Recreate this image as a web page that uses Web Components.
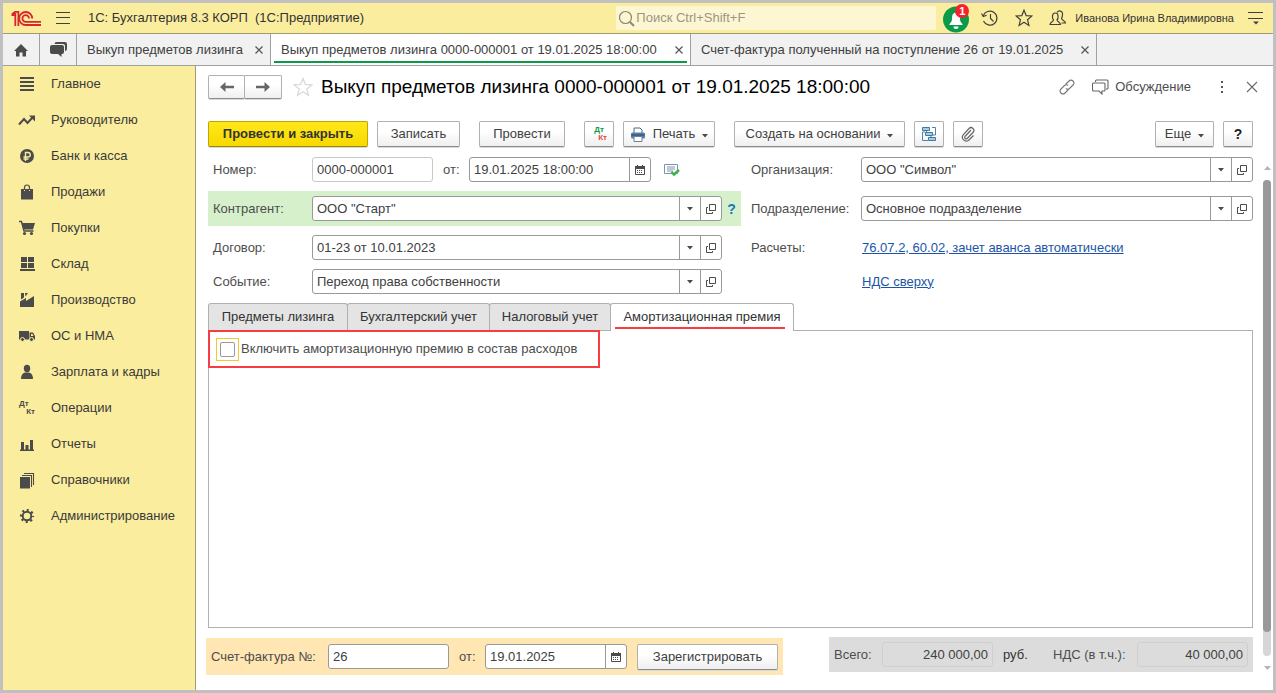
<!DOCTYPE html>
<html lang="ru">
<head>
<meta charset="utf-8">
<title>1С: Бухгалтерия 8.3 КОРП</title>
<style>
  html, body { margin: 0; height: 100%; }
  body { font: 13px/16px "Liberation Sans", Arial, sans-serif; color: #404040; background: #fff; }
</style>
</head>
<body>
<app-shell>
  <app-header slot="header"></app-header>
  <window-tabs slot="tabs">
    <window-tab icon="home"></window-tab>
    <window-tab icon="chat"></window-tab>
    <window-tab closable style="width:194px">Выкуп предметов лизинга</window-tab>
    <window-tab closable active style="width:420px">Выкуп предметов лизинга 0000-000001 от 19.01.2025 18:00:00</window-tab>
    <window-tab closable style="width:406px">Счет-фактура полученный на поступление 26 от 19.01.2025</window-tab>
  </window-tabs>
  <side-nav slot="nav">
    <nav-item icon="list">Главное</nav-item>
    <nav-item icon="trend">Руководителю</nav-item>
    <nav-item icon="ruble">Банк и касса</nav-item>
    <nav-item icon="bag">Продажи</nav-item>
    <nav-item icon="cart">Покупки</nav-item>
    <nav-item icon="store">Склад</nav-item>
    <nav-item icon="factory">Производство</nav-item>
    <nav-item icon="truck">ОС и НМА</nav-item>
    <nav-item icon="person">Зарплата и кадры</nav-item>
    <nav-item icon="dtkt">Операции</nav-item>
    <nav-item icon="bars">Отчеты</nav-item>
    <nav-item icon="books">Справочники</nav-item>
    <nav-item icon="gear">Администрирование</nav-item>
  </side-nav>
  <document-form></document-form>
</app-shell>

<script>
const DARK = '#4b4b4b';
const ICONS = {
  logo: [30, 17, `<g fill="none" stroke="#d8262b" stroke-width="1.800"><path d="M.5 5H3v-.500M3.200 5V2.500M1 4.200L4 1.800H7.400V16M4.300 3v13"/><path d="M21.200 8.500A6.500 6.500 0 1 0 14.700 15H30"/><path d="M18 8.500A3.300 3.300 0 1 0 14.700 11.800H30"/></g>`],
  burger: [14, 12, `<path d="M0 .5h14M0 5.500h14M0 11.500h14" stroke="#404040" fill="none"/>`],
  search: [17, 17, `<circle cx="7.500" cy="7.500" r="6" fill="none" stroke="#8c8768" stroke-width="1.200"/><path d="M12 12l4 4" stroke="#8c8768" stroke-width="2"/>`],
  bell: [30, 29, `<circle cx="14" cy="15.500" r="13" fill="#0a9a48"/><path d="M14 8.500c3.500.5 4 3 4 6 0 3 1 4 2.500 5.500v1h-13v-1C9 18.500 10 17.500 10 14.500c0-3 .5-5.500 4-6z" fill="#fff"/><path d="M11.500 22.500h5a2.500 2.500 0 0 1-5 0z" fill="#fff"/>`],
  history: [18, 18, `<g fill="none" stroke="#404040" stroke-width="1.200"><path d="M2.200 7A7 7 0 1 1 2.500 12"/><path d="M.5 4.500L2.300 7.600l3.300-1.400M9.500 5v4.500l3 3"/></g>`],
  star: [18, 18, `<path d="M9 1.200l2.200 5.400 5.700.4-4.400 3.700 1.400 5.700L9 13.300l-4.900 3.100 1.400-5.700L1.100 7l5.700-.4z" fill="none" stroke="#404040" stroke-width="1.200"/>`],
  favorite: [20, 20, `<path d="M10 1.500l2.400 6 6.400.4-5 4.100 1.700 6.300L10 14.800l-5.500 3.500L6.200 12l-5-4.100 6.400-.4z" fill="none" stroke="#d9d9d9" stroke-width="1.300"/>`],
  people: [18, 16, `<g fill="none" stroke="#404040" stroke-width="1.200"><path d="M1 14.500h10.500c0-2.500-3.500-3-3.500-4.500 1.500-1.500 2-7-1.700-7S3 8.500 4.500 10c0 1.500-3.500 2-3.500 4.500z"/><path d="M8 2.500C10-.5 14 1 13.500 4.500c0 2-.5 3-1 4 0 1.500 4 2 4 4.500h-4"/></g>`],
  menu: [15, 14, `<path d="M0 1.500h15M0 7.500h15" stroke="#404040" stroke-width="1.200"/><path d="M5 10.500h6l-3 3z" fill="#404040"/>`],
  close: [8, 8, `<path d="M.5.5l7 7M7.500.5l-7 7" stroke="#555" stroke-width="1.200"/>`],
  closebig: [12, 12, `<path d="M1 1l10 10M11 1L1 11" stroke="#6a6a6a" stroke-width="1.100"/>`],
  home: [16, 14, `<path d="M8 1L1 8h2v5.500h3.500V9.500h3v4H13V8h2z" fill="${DARK}"/>`],
  chat: [17, 16, `<path d="M4.500 2q0-2 2-2H15q2 0 2 2v5q0 2-2 2V4q0-2-2-2z" fill="${DARK}"/><path d="M2 3h10q2 0 2 2v5q0 2-2 2h-.500v3L8 12H2q-2 0-2-2V5q0-2 2-2z" fill="${DARK}"/>`],
  list: [16, 16, `<path d="M1 2h14M1 6h14M1 10h14M1 14h14" stroke="${DARK}" stroke-width="2"/>`],
  trend: [18, 16, `<path d="M1 12.500l5-5.500 3.500 4 5-5.500" fill="none" stroke="${DARK}" stroke-width="2"/><path d="M11 3.500h6v6z" fill="${DARK}"/>`],
  ruble: [16, 16, `<circle cx="8" cy="8" r="7" fill="${DARK}"/><path d="M6.500 13V4.500H9a2.200 2.200 0 0 1 0 4.500H4.500M4.500 11H9.500" fill="none" stroke="#fbed9e" stroke-width="1.400"/>`],
  bag: [16, 16, `<path d="M2 5h3v2h1V5h4v2h1V5h3v10.500H2z" fill="${DARK}"/><path d="M5.500 6V3.500a2.500 2.500 0 0 1 5 0V6" fill="none" stroke="${DARK}" stroke-width="1.200"/>`],
  cart: [18, 16, `<path d="M1 1.500h2.500L6 11h9.500" fill="none" stroke="${DARK}" stroke-width="1.400"/><path d="M3.500 3H17l-2 6.500H5.500z" fill="${DARK}"/><circle cx="6.500" cy="13.500" r="1.600" fill="${DARK}"/><circle cx="13.500" cy="13.500" r="1.600" fill="${DARK}"/>`],
  store: [16, 16, `<path d="M2 1h6v5H2zM9 1h6v5H9zM2 7h6v5H2zM9 7h6v5H9zM1 13h15v2H1z" fill="${DARK}"/>`],
  factory: [16, 16, `<path d="M1 15V9.500L7 6v3l8-5v11z" fill="${DARK}"/><path d="M2 1h3v4.500L2 7.500zM6 1h3L6.500 4.500z" fill="${DARK}"/>`],
  truck: [18, 14, `<path d="M1 2h10v8.500H1zM11.500 3.500h3.500l2 3.500v3.500h-5.500z" fill="${DARK}"/><path d="M13 5h1.500l1 2H13z" fill="#fbed9e"/><circle cx="4.500" cy="10.500" r="2" fill="${DARK}" stroke="#fbed9e"/><circle cx="13.500" cy="10.500" r="2" fill="${DARK}" stroke="#fbed9e"/>`],
  person: [16, 16, `<ellipse cx="8" cy="4.500" rx="3.200" ry="3.700" fill="${DARK}"/><path d="M2 15q0-5.500 4-6.500h4q4 1 4 6.500z" fill="${DARK}"/>`],
  bars: [16, 16, `<path d="M1 13.500h14V15H1zM2 6h3v8H2zM6.500 9h3v5h-3zM11 4h3v10h-3z" fill="${DARK}"/>`],
  books: [16, 17, `<path d="M1 5h10v11.500H1z" fill="${DARK}"/><path d="M3 3.500h9.500V15M5 1.500h9.500V13" fill="none" stroke="${DARK}" stroke-width="1.100"/>`],
  gear: [16, 16, `<circle cx="8" cy="8" r="4.300" fill="none" stroke="${DARK}" stroke-width="2"/><circle cx="8" cy="8" r="6" fill="none" stroke="${DARK}" stroke-width="2.200" stroke-dasharray="2.100 2.612" stroke-dashoffset="1"/>`],
  back: [16, 12, `<path d="M6.500 1L1 6l5.500 5V7.200H15V4.800H6.500z" fill="#666"/>`],
  forward: [16, 12, `<path d="M9.500 1L15 6l-5.500 5V7.200H1V4.800h8.500z" fill="#666"/>`],
  link: [16, 16, `<g fill="none" stroke="#777" stroke-width="1.100"><path d="M6.500 5.500L10 2a2.700 2.700 0 0 1 4 4l-3.500 3.500a2.700 2.700 0 0 1-3.500 0"/><path d="M9.500 10.500L6 14a2.700 2.700 0 0 1-4-4l3.500-3.500a2.700 2.700 0 0 1 3.500 0"/></g>`],
  discuss: [17, 16, `<g fill="none" stroke="#666" stroke-width="1.100"><path d="M3.500 3V2q0-1 1-1H15q1 0 1 1v7q0 1-1 1h-1"/><path d="M1.500 4H12q1 0 1 1v6q0 1-1 1h-2v3l-3-3H1.500q-1 0-1-1V5q0-1 1-1z"/></g>`],
  dots: [4, 14, `<path d="M1 1h2v2H1zM1 6h2v2H1zM1 11h2v2H1z" fill="#555"/>`],
  printer: [16, 15, `<path d="M4 6V1h6l2 2v3" fill="#fff" stroke="#4c6785"/><rect x="1" y="5.500" width="14" height="6" rx="1.500" fill="#5580a8"/><path d="M1.500 8h13" stroke="#2c4966"/><path d="M4 9.500h8v5H4z" fill="#fff" stroke="#6f8296"/>`],
  structure: [16, 16, `<g fill="none" stroke="#4d83ac"><path d="M4 6H1.500v8.500H7M11 1.500h3.500V9H12"/><path d="M5.500 4.500v2M10 9v2" /></g><g fill="#a9cbe2" stroke="#3f78a3"><path d="M1.500 1.500h7v3h-7zM4.500 6.500h7v3h-7zM7.500 11.500h7v3h-7z"/></g>`],
  clip: [16, 16, `<path d="M11 4L5 10.500a1.500 1.500 0 0 0 2.200 2L13 6.500a2.800 2.800 0 0 0-4-4L3 9a4 4 0 0 0 5.500 5.500l5-5" fill="none" stroke="#666" stroke-width="1.200"/>`],
  caret: [6, 4, `<path d="M0 0h6L3 3.500z" fill="#4b4b4b"/>`],
  open: [10, 10, `<path d="M3.500.5h6v6h-6z" fill="none" stroke="#4b4b4b"/><path d="M2 3.500H.5v6h6V8" fill="none" stroke="#4b4b4b"/>`],
  calendar: [10, 10, `<path d="M.5 1.500h9v8h-9z" fill="#fff" stroke="#4b4b4b"/><path d="M0 1h10v3H0zM2 0h1v2H2zM7 0h1v2H7z" fill="#4b4b4b"/><path d="M2 5.500h6M2 7.500h6" stroke="#4b4b4b" stroke-dasharray="1 1"/>`],
  posted: [16, 14, `<path d="M.5 1.500h13v9H.5z" fill="#fff" stroke="#7e94a8"/><path d="M3 4h8M3 6h8M3 8h6" stroke="#7e94a8"/><path d="M7.500 9l2.500 2.500L15 7" fill="none" stroke="#35b449" stroke-width="2.400"/>`],
  up: [7, 4, `<path d="M0 4h7L3.500 0z" fill="#b4b4b4"/>`],
  down: [7, 4, `<path d="M0 0h7L3.500 4z" fill="#b4b4b4"/>`],
};

const define = (name, render) => customElements.define(name, class extends HTMLElement {
  connectedCallback() {
    if (this.shadowRoot) return;
    this.attachShadow({ mode: 'open' }).innerHTML = render(this);
  }
});

define('ui-icon', el => {
  const name = el.getAttribute('name');
  if (name === 'dtkt') {
    return `<style>
      :host { display: block; width: 16px; font: bold 8px/8px "Liberation Sans", Arial, sans-serif; color: var(--dt, #4b4b4b); }
      span { display: block; }
      span + span { text-align: right; color: var(--kt, #4b4b4b); }
    </style><span>Дт</span><span>Кт</span>`;
  }
  const [w, h, body] = ICONS[name];
  return `<style>:host { display: block; flex: none; } svg { display: block; }</style>
    <svg width="${w}" height="${h}" viewBox="0 0 ${w} ${h}" aria-hidden="true">${body}</svg>`;
});

define('app-shell', () => `<style>
  :host { display: flex; flex-direction: column; box-sizing: border-box; min-height: 100vh; border: 3px solid #c0c0c0; }
  .body { flex: 1; display: flex; }
  ::slotted(document-form) { flex: 1; min-width: 0; }
</style>
<slot name="header"></slot><slot name="tabs"></slot>
<div class="body"><slot name="nav"></slot><slot></slot></div>`);
document.querySelector('document-form').slot = '';

define('app-header', () => `<style>
  :host { display: flex; align-items: center; height: 30px; padding: 0 10px 0 8px; background: #fbed9e; border-bottom: 1px solid #a09a77; color: #333; }
  .burger { margin: 0 18px 0 15px; }
  .search { display: flex; align-items: center; width: 320px; height: 24px; margin-left: auto; background: #fdf6d2; border-radius: 2px; }
  .search ui-icon { margin: 0 1px 0 2px; }
  input { flex: 1; min-width: 0; border: 0; padding: 0; background: none; font: inherit; outline: 0; }
  input::placeholder { color: #9b977f; opacity: 1; }
  .tools { display: flex; align-items: center; gap: 16px; margin-left: 6px; }
  .bell { position: relative; width: 30px; margin-right: -7px; }
  .badge { position: absolute; left: 13px; top: 0; width: 14px; height: 14px; border-radius: 7px; background: #f5222d; color: #fff; font: bold 11px/14px "Liberation Sans", Arial, sans-serif; text-align: center; }
  .user { font-size: 11px; margin: 0 14px 0 8px; }
  button { border: 0; padding: 0; background: none; font: inherit; color: inherit; }
</style>
<ui-icon name="logo"></ui-icon>
<button class="burger" aria-label="Меню функций"><ui-icon name="burger"></ui-icon></button>
<span>1С: Бухгалтерия 8.3 КОРП &nbsp;(1С:Предприятие)</span>
<label class="search"><ui-icon name="search"></ui-icon><input type="text" placeholder="Поиск Ctrl+Shift+F" aria-label="Поиск"></label>
<div class="tools">
  <button class="bell" aria-label="Оповещения"><ui-icon name="bell"></ui-icon><span class="badge">1</span></button>
  <button aria-label="История"><ui-icon name="history"></ui-icon></button>
  <button aria-label="Избранное"><ui-icon name="star"></ui-icon></button>
  <button aria-label="Пользователи"><ui-icon name="people"></ui-icon></button>
</div>
<span class="user">Иванова Ирина Владимировна</span>
<button aria-label="Сервис"><ui-icon name="menu"></ui-icon></button>`);

define('window-tabs', () => `<style>
  :host { display: flex; height: 31px; background: #f1f1f1; border-bottom: 1px solid #a0a0a0; }
</style><slot></slot>`);

define('window-tab', el => `<style>
  :host { display: flex; align-items: center; justify-content: center; box-sizing: border-box; border-right: 1px solid #a0a0a0; color: #404040; white-space: nowrap; }
  :host([icon]) { width: 37px; }
  :host([closable]) { padding: 0 7px 0 10px; justify-content: space-between; }
  :host([active]) { position: relative; background: #fff; }
  :host([active])::after { content: ""; position: absolute; left: 3px; right: 3px; bottom: 2px; height: 2px; background: #0a9a48; }
  button { border: 0; padding: 0; background: none; font: inherit; color: inherit; }
</style>
${el.hasAttribute('icon') ? `<button aria-label="Открыть"><ui-icon name="${el.getAttribute('icon')}"></ui-icon></button>` : '<button><slot></slot></button>'}
${el.hasAttribute('closable') ? '<button aria-label="Закрыть"><ui-icon name="close"></ui-icon></button>' : ''}`);

define('side-nav', () => `<style>
  :host { display: block; width: 192px; background: #fbed9e; border-right: 1px solid #a09a77; }
</style><nav><slot></slot></nav>`);

define('nav-item', el => `<style>
  :host { display: block; }
  a { display: flex; align-items: center; height: 36px; color: #3a3a3a; text-decoration: none; }
  .icon { display: flex; justify-content: center; width: 48px; }
</style><a href="#"><span class="icon"><ui-icon name="${el.getAttribute('icon')}"></ui-icon></span><slot></slot></a>`);

define('tool-button', el => `<style>
  :host { display: block; flex: none; }
  button { display: flex; align-items: center; justify-content: center; gap: 6px; box-sizing: border-box; width: 100%; height: var(--h, 26px); padding: 0;
    border: 1px solid #b0b0b0; border-bottom-color: #8c8c8c; border-radius: 2px; background: linear-gradient(#fff 40%, #efefef); font: inherit; color: #404040; white-space: nowrap; box-shadow: 0 1px 0 #d8d8d8; }
  :host([primary]) button { background: linear-gradient(#ffe81a, #f8d900); border-color: #c2a500; border-bottom-color: #9d8700; font-weight: bold; color: #333; }
  :host([menu]) button { gap: 7px; }
  :host([strong]) button { font-weight: bold; color: #222; font-size: 14px; }
  .caret { padding-top: 3px; }
</style><button aria-label="${el.getAttribute('name') || el.textContent.trim()}">
${el.hasAttribute('icon') ? `<ui-icon name="${el.getAttribute('icon')}"></ui-icon>` : ''}<slot></slot>
${el.hasAttribute('menu') ? '<ui-icon class="caret" name="caret"></ui-icon>' : ''}</button>`);

/* kinds: plain, date (calendar button), pick (list and open buttons) */
define('form-field', el => {
  const kind = el.getAttribute('kind') || 'plain';
  const side = { plain: [], date: ['calendar'], pick: ['caret', 'open'] }[kind];
  return `<style>
  :host { display: flex; align-items: center; }
  label { flex: none; box-sizing: border-box; width: var(--label, auto); color: #4d4d4d; white-space: nowrap; }
  .box { display: flex; flex: 1; min-width: 0; box-sizing: border-box; height: 25px; border: 1px solid #999; border-radius: 3px; background: #fff; }
  input { flex: 1; min-width: 0; width: 0; border: 0; padding: 0 4px; background: none; font: inherit; color: #404040; outline: 0; }
  button { display: flex; align-items: center; justify-content: center; box-sizing: border-box; width: 21px; padding: 0; border: 0; border-left: 1px solid #999; background: none; }
  :host([readonly]) .box { border-color: #c8c8c8; }
  :host([total]) .box { background: #dcdcdc; border-color: #cfcfcf; }
  :host([total]) input { text-align: right; }
</style>
<label for="f">${el.getAttribute('label')}</label>
<div class="box"><input id="f" type="text" value='${el.getAttribute('value')}'${el.hasAttribute('readonly') || el.hasAttribute('total') ? ' readonly' : ''}>
${side.map(n => `<button aria-label="${n}"><ui-icon name="${n}"></ui-icon></button>`).join('')}</div>`;
});

define('page-tab', () => `<style>
  :host { display: block; box-sizing: border-box; height: 27px; margin-right: -1px; border: 1px solid #b0b0b0; border-bottom: 0; border-radius: 3px 3px 0 0; background: #e4e4e4; color: #333; }
  :host([active]) { position: relative; height: 28px; background: #fff; }
  :host([active]) button::after { content: ""; position: absolute; left: 4px; right: 8px; bottom: 2px; height: 2px; background: #f53d42; }
  button { width: 100%; height: 26px; border: 0; padding: 0; background: none; font: inherit; color: inherit; }
</style><button role="tab"><slot></slot></button>`);

define('scroll-rail', () => `<style>
  :host { display: flex; flex-direction: column; align-items: center; width: 8px; padding: 9px 0 2px; }
  .track { flex: 1; width: 8px; margin: 10px 0; border-radius: 4px; background: #d6d6d6; }
  .thumb { height: 95%; border-radius: 4px; background: #999; }
</style><ui-icon name="up"></ui-icon><div class="track"><div class="thumb"></div></div><ui-icon name="down"></ui-icon>`);

define('document-form', () => `<style>
  :host { display: flex; flex-direction: column; padding: 9px 0 18px 12px; background: #fff; }
  .head { display: flex; align-items: center; height: 24px; padding-right: 15px; }
  .arrows { display: flex; --h: 24px; }
  .arrows tool-button { width: 37px; }
  .arrows tool-button + tool-button { width: 38px; margin-left: -1px; }
  h1 { flex: 1; margin: 0 0 0 8px; font-weight: normal; font-size: 19px; line-height: 24px; color: #000; }
  .head > ui-icon { margin-left: 11px; }
  .plain { display: flex; align-items: center; gap: 6px; border: 0; padding: 0; background: none; font: inherit; color: #4d4d4d; }
  .actions { display: flex; align-items: center; }
  .actions .plain:nth-child(2) { margin: 0 29px 0 17px; }
  .actions .plain:nth-child(4) { margin-left: 22px; }
  .bar { display: flex; gap: 9px; margin: 22px 20px 10px 0; }
  .gap { margin-left: 10px; }
  .right { margin-left: auto; }
  .area { flex: 1; display: flex; gap: 10px; padding-right: 2px; }
  .form { flex: 1; min-width: 0; display: flex; flex-direction: column; }
  .grid { display: grid; grid-template-columns: 533fr 512fr; row-gap: 9px; }
  .cell { display: flex; align-items: center; }
  .cell form-field { flex: 1; --label: 99px; }
  .cell.l { padding: 0 19px 0 5px; }
  .cell.r { padding-left: 10px; }
  .cell.r form-field { --label: 110px; }
  .cell.l.mark { height: 35px; background: #d6f0cb; padding-right: 0; }
  .help { width: 19px; text-align: center; color: #1479b8; text-decoration: none; font-size: 14px; font-weight: bold; }
  .cell form-field.num { flex: none; width: 220px; }
  .cell form-field.date { flex: none; width: 208px; --label: 26px; margin: 0 13px 0 10px; }
  .term { width: 111px; color: #4d4d4d; }
  .link { color: #1c55a8; }
  .tabs { display: flex; height: 27px; margin-top: 9px; }
  .panel { flex: 1; border: 1px solid #b0b0b0; background: #fff; }
  .tabs page-tab[active] { z-index: 1; }
  .callout { display: flex; align-items: center; box-sizing: border-box; width: 392px; height: 38px; margin: -1px 0 0 -1px; padding-left: 6px; border: 2px solid #f53d42; }
  .callout label { display: flex; align-items: center; gap: 2px; color: #4d4d4d; }
  .focus { display: flex; padding: 3px; border: 1px solid #f5c92e; }
  .focus input { appearance: none; width: 15px; height: 15px; margin: 0; border: 1px solid #999; border-radius: 2px; background: #fff; }
  .foot { display: flex; align-items: flex-start; margin-top: 9px; height: 35px; }
  .invoice { display: flex; align-items: center; box-sizing: border-box; height: 37px; margin: 1px 0 0 -2px; padding: 0 5px; background: #ffe6b3; }
  .totals { display: flex; align-items: center; box-sizing: border-box; height: 35px; margin-left: auto; padding: 0 5px; background: #dcdcdc; }
</style>
<div class="head">
  <div class="arrows"><tool-button icon="back" name="Назад"></tool-button><tool-button icon="forward" name="Вперед"></tool-button></div>
  <ui-icon name="favorite"></ui-icon>
  <h1>Выкуп предметов лизинга 0000-000001 от 19.01.2025 18:00:00</h1>
  <div class="actions">
    <button class="plain" aria-label="Ссылка"><ui-icon name="link"></ui-icon></button>
    <button class="plain"><ui-icon name="discuss"></ui-icon>Обсуждение</button>
    <button class="plain" aria-label="Еще"><ui-icon name="dots"></ui-icon></button>
    <button class="plain" aria-label="Закрыть"><ui-icon name="closebig"></ui-icon></button>
  </div>
</div>
<div class="bar">
  <tool-button primary style="width:160px">Провести и закрыть</tool-button>
  <tool-button style="width:83px">Записать</tool-button>
  <tool-button class="gap" style="width:86px">Провести</tool-button>
  <tool-button class="gap" icon="dtkt" name="Проводки" style="width:30px;--dt:#0a9a48;--kt:#e04545"></tool-button>
  <tool-button icon="printer" menu style="width:92px">Печать</tool-button>
  <tool-button class="gap" menu style="width:171px">Создать на основании</tool-button>
  <tool-button icon="structure" name="Структура подчиненности" style="width:30px"></tool-button>
  <tool-button icon="clip" name="Файлы" style="width:30px"></tool-button>
  <tool-button class="right" menu style="width:59px">Еще</tool-button>
  <tool-button strong style="width:30px">?</tool-button>
</div>
<div class="area">
  <div class="form">
    <div class="grid">
      <div class="cell l">
        <form-field class="num" readonly label="Номер:" value="0000-000001"></form-field>
        <form-field class="date" kind="date" label="от:" value="19.01.2025 18:00:00"></form-field>
        <ui-icon name="posted"></ui-icon>
      </div>
      <div class="cell r"><form-field kind="pick" label="Организация:" value='ООО "Символ"'></form-field></div>
      <div class="cell l mark"><form-field kind="pick" label="Контрагент:" value='ООО "Старт"'></form-field><a class="help" href="#">?</a></div>
      <div class="cell r"><form-field kind="pick" label="Подразделение:" value="Основное подразделение"></form-field></div>
      <div class="cell l"><form-field kind="pick" label="Договор:" value="01-23 от 10.01.2023"></form-field></div>
      <div class="cell r"><span class="term">Расчеты:</span><a class="link" href="#">76.07.2, 60.02, зачет аванса автоматически</a></div>
      <div class="cell l"><form-field kind="pick" label="Событие:" value="Переход права собственности"></form-field></div>
      <div class="cell r"><span class="term"></span><a class="link" href="#">НДС сверху</a></div>
    </div>
    <div class="tabs" role="tablist">
      <page-tab style="width:140px">Предметы лизинга</page-tab>
      <page-tab style="width:143px">Бухгалтерский учет</page-tab>
      <page-tab style="width:122px">Налоговый учет</page-tab>
      <page-tab active style="width:184px">Амортизационная премия</page-tab>
    </div>
    <div class="panel">
      <div class="callout"><label><span class="focus"><input type="checkbox"></span>Включить амортизационную премию в состав расходов</label></div>
    </div>
    <div class="foot">
      <div class="invoice">
        <form-field style="width:238px;--label:117px" label="Счет-фактура №:" value="26"></form-field>
        <form-field kind="date" style="width:168px;--label:26px;margin:0 10px" label="от:" value="19.01.2025"></form-field>
        <tool-button style="width:141px">Зарегистрировать</tool-button>
      </div>
      <div class="totals">
        <form-field total style="width:159px;--label:48px" label="Всего:" value="240 000,00"></form-field>
        <span style="width:50px;margin-left:10px;color:#333">руб.</span>
        <form-field total style="width:195px;--label:84px" label="НДС (в т.ч.):" value="40 000,00"></form-field>
      </div>
    </div>
  </div>
  <scroll-rail></scroll-rail>
</div>`);
</script>
</body>
</html>
